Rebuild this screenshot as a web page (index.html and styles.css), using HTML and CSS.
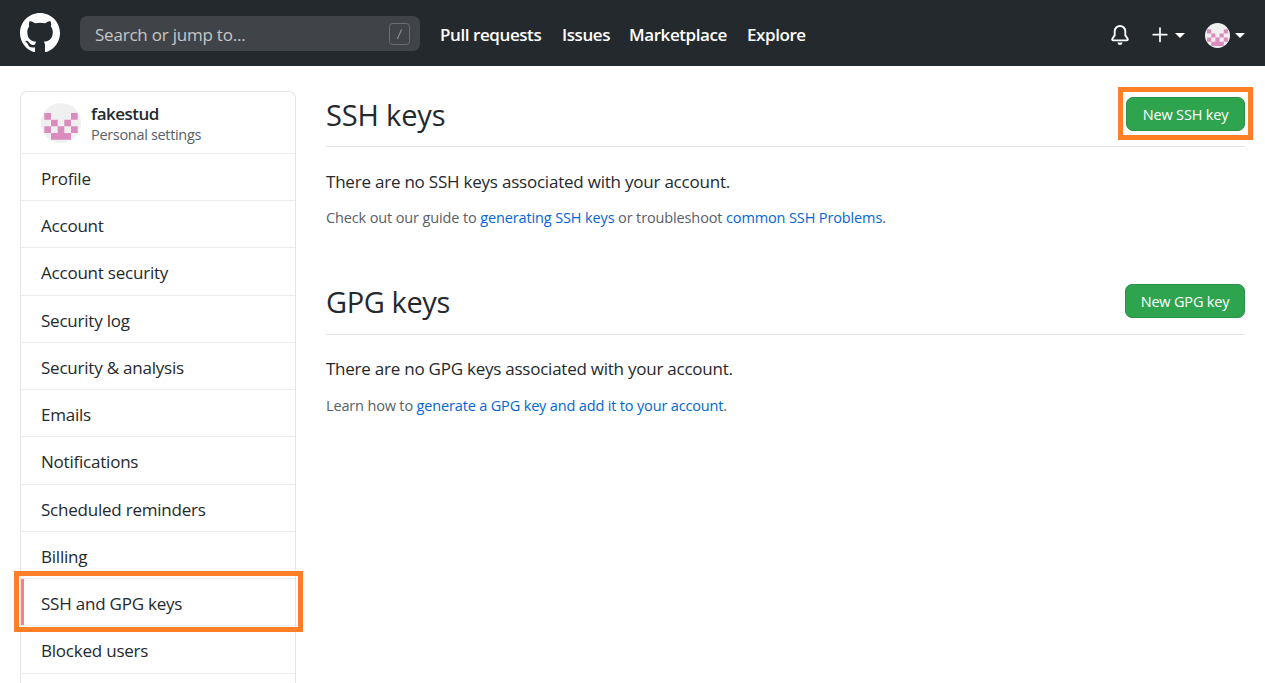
FILE: index.html
```html
<!DOCTYPE html>
<html lang="en">
<head>
<meta charset="utf-8">
<title>SSH and GPG keys</title>
<link rel="stylesheet" href="styles.css">
</head>
<body>
<svg class="sprite" aria-hidden="true">
  <symbol id="identicon" viewBox="0 0 40 40">
    <circle cx="20" cy="20" r="20" fill="#f0f0f0"/>
    <path fill="#da8cbe" d="M3.3 10H10v6.7H3.3zM30 10h6.7v6.7H30zM10 16.7h6.7v6.6H10zM23.3 16.7H30v6.6h-6.7zM3.3 23.3H10V30H3.3zM16.7 23.3h6.6V30h-6.6zM30 23.3h6.7V30H30zM10 30h20v6.7H10z"/>
  </symbol>
</svg>
<header class="topbar">
  <svg class="logo" viewBox="0 0 16 16"><path fill="#fff" d="M8 0C3.58 0 0 3.58 0 8c0 3.54 2.29 6.53 5.47 7.59.4.07.55-.17.55-.38 0-.19-.01-.82-.01-1.49-2.01.37-2.53-.49-2.69-.94-.09-.23-.48-.94-.82-1.13-.28-.15-.68-.52-.01-.53.63-.01 1.08.58 1.23.82.72 1.21 1.87.87 2.33.66.07-.52.28-.87.51-1.07-1.78-.2-3.64-.89-3.64-3.95 0-.87.31-1.59.82-2.15-.08-.2-.36-1.02.08-2.12 0 0 .67-.21 2.2.82.64-.18 1.32-.27 2-.27s1.36.09 2 .27c1.53-1.04 2.2-.82 2.2-.82.44 1.1.16 1.92.08 2.12.51.56.82 1.27.82 2.15 0 3.07-1.87 3.75-3.65 3.95.29.25.54.73.54 1.48 0 1.07-.01 1.93-.01 2.2 0 .21.15.46.55.38A8.01 8.01 0 0016 8c0-4.42-3.58-8-8-8z"/></svg>
  <div class="search"><span class="search-label">Search or jump to...</span><svg class="slash" viewBox="0 0 21 22"><rect x=".5" y=".5" width="20" height="21" rx="3" fill="none" stroke="#6a6f74"/><path d="M8.3 16 12.6 6.5" fill="none" stroke="#8a8f93" stroke-width="1.1"/></svg></div>
  <nav class="nav">
    <a class="nav-pulls">Pull requests</a><a class="nav-issues">Issues</a><a class="nav-market">Marketplace</a><a class="nav-explore">Explore</a>
  </nav>
  <div class="tools">
    <svg class="icon bell" viewBox="0 0 16 16"><path fill="#fff" d="M8 16a2 2 0 001.985-1.75c.017-.137-.097-.25-.235-.25h-3.5c-.138 0-.252.113-.235.25A2 2 0 008 16z"/><path fill="#fff" fill-rule="evenodd" d="M8 1.5A3.5 3.5 0 004.5 5v2.947c0 .346-.102.683-.294.97l-1.703 2.556a.018.018 0 00-.003.01l.001.006c0 .002.002.004.004.006a.017.017 0 00.006.004l.007.001h10.964l.007-.001a.016.016 0 00.006-.004.016.016 0 00.004-.006l.001-.007a.017.017 0 00-.003-.01l-1.703-2.554a1.75 1.75 0 01-.294-.97V5A3.5 3.5 0 008 1.5zM3 5a5 5 0 0110 0v2.947c0 .05.015.098.042.139l1.703 2.555A1.518 1.518 0 0113.482 13H2.518a1.518 1.518 0 01-1.263-2.36l1.703-2.554A.25.25 0 003 7.947V5z"/></svg>
    <svg class="icon plus" viewBox="0 0 20 20"><path fill="none" stroke="#fff" stroke-width="1.7" stroke-linecap="round" d="M10 3v13.5M3.2 9.7h13.6"/></svg>
    <i class="caret caret-plus"></i>
    <svg class="avatar-small"><use href="#identicon"/></svg>
    <i class="caret"></i>
  </div>
</header>
<div class="page">
  <aside class="menu">
    <div class="menu-head">
      <svg class="avatar"><use href="#identicon"/></svg>
      <div><div class="user">fakestud</div><div class="user-sub">Personal settings</div></div>
    </div>
    <a class="item">Profile</a>
    <a class="item">Account</a>
    <a class="item">Account security</a>
    <a class="item">Security log</a>
    <a class="item">Security &amp; analysis</a>
    <a class="item">Emails</a>
    <a class="item">Notifications</a>
    <a class="item">Scheduled reminders</a>
    <a class="item">Billing</a>
    <a class="item current">SSH and GPG keys</a>
    <a class="item">Blocked users</a>
    <div class="menu-rest"></div>
  </aside>
  <main class="content">
    <section class="keys">
      <div class="keys-head"><h2 class="title title-ssh">SSH keys</h2><a class="btn marked">New SSH key</a></div>
      <p class="lead">There are no SSH keys associated with your account.</p>
      <p class="note">Check out our guide to <a class="link">generating SSH keys</a> or troubleshoot <a class="link">common SSH Problems</a>.</p>
    </section>
    <section class="keys keys-gpg">
      <div class="keys-head"><h2 class="title">GPG keys</h2><a class="btn">New GPG key</a></div>
      <p class="lead">There are no GPG keys associated with your account.</p>
      <p class="note">Learn how to <a class="link">generate a GPG key and add it to your account</a>.</p>
    </section>
  </main>
</div>
</body>
</html>
```
FILE: styles.css
```css
* { box-sizing: border-box; }
body {
  margin: 0;
  height: 683px;
  overflow: hidden;
  background: #fff;
  color: #24292e;
  font-family: "Open Sans", "Noto Sans", sans-serif;
  font-size: 17px;
  letter-spacing: -0.22px;
  white-space: nowrap;
}
.sprite { position: absolute; width: 0; height: 0; }
.topbar {
  display: flex;
  align-items: center;
  height: 66px;
  padding: 0 20px;
  background: #24292e;
  color: #fff;
}
.logo { width: 40px; height: 40px; }
.search {
  display: flex;
  align-items: center;
  justify-content: space-between;
  width: 340px;
  height: 35px;
  margin: 1px 20px 0;
  padding: 0 10px 0 15px;
  border-radius: 7px;
  background: #404448;
  color: #c6c7c8;
}
.search-label { padding-top: 2px; }
.slash { width: 21px; height: 22px; }
.nav { display: flex; gap: 20px; padding-top: 2px; font-weight: 600; letter-spacing: -0.42px; }
.nav-pulls { width: 102px; }
.nav-issues { width: 47px; }
.nav-market { width: 98px; }
.tools { display: flex; align-items: center; margin-left: auto; padding-top: 4px; }
.icon { width: 20px; height: 20px; }
.plus { margin-left: 20px; }
.caret { border: 5px solid transparent; border-top-color: #fff; border-bottom: 0; }
.caret-plus { margin: 1px 20px 0 5px; }
.avatar-small { width: 25px; height: 25px; margin-right: 5px; }
.page { display: flex; gap: 30px; height: 617px; padding: 25px 20px 0; }
.menu {
  flex: none;
  width: 276px;
  border: 1px solid #e1e4e8;
  border-bottom: 0;
  border-radius: 7px 7px 0 0;
}
.menu-head {
  display: flex;
  gap: 10px;
  height: 60.9px;
  padding: 11px 20px 0;
  font-size: 14.5px;
}
.avatar { width: 40px; height: 40px; }
.user { font-size: 17px; font-weight: 600; line-height: 22px; letter-spacing: -0.5px; }
.user-sub { line-height: 19px; color: #586069; letter-spacing: -0.32px; }
.item {
  display: block;
  height: 47.25px;
  padding-left: 20px;
  border-top: 1px solid #eaecef;
  line-height: 49px;
  letter-spacing: -0.22px;
}
.menu-rest { border-top: 1px solid #eaecef; }
.current { position: relative; box-shadow: inset 3px 0 #f9826c; }
.current::after {
  content: "";
  position: absolute;
  inset: -8px -8px -7px -7px;
  border: 5px solid #ff7f27;
}
.content { flex: 1; }
.keys { height: 187px; }
.keys-head {
  display: flex;
  align-items: flex-start;
  justify-content: space-between;
  height: 56px;
  padding-top: 6px;
  border-bottom: 1px solid #e1e4e8;
}
.keys-gpg .keys-head { height: 57px; }
.title { margin: -1px 0 0; font-size: 29px; font-weight: 400; line-height: 38px; letter-spacing: -0.4px; }
.title-ssh { letter-spacing: -0.15px; }
.btn {
  position: relative;
  height: 34px;
  width: 120px;
  border: 1px solid #2a9147;
  border-radius: 7px;
  background: #2ea44f;
  color: #fff;
  font-size: 14.5px;
  line-height: 34px;
  text-align: center;
  letter-spacing: -0.18px;
}
.marked { width: 119px; }
.marked::after {
  content: "";
  position: absolute;
  inset: -11px -9px -10px -9px;
  border: 5px solid #ff7f27;
}
.lead { margin: 22px 0 0; line-height: 26px; }
.keys-gpg .lead { margin-top: 21px; letter-spacing: -0.24px; }
.note { margin: 12px 0 0; font-size: 14.5px; line-height: 22px; color: #586069; letter-spacing: -0.13px; }
.keys-gpg .note { margin-top: 13px; letter-spacing: -0.16px; }
.link { color: #0366d6; }
```
